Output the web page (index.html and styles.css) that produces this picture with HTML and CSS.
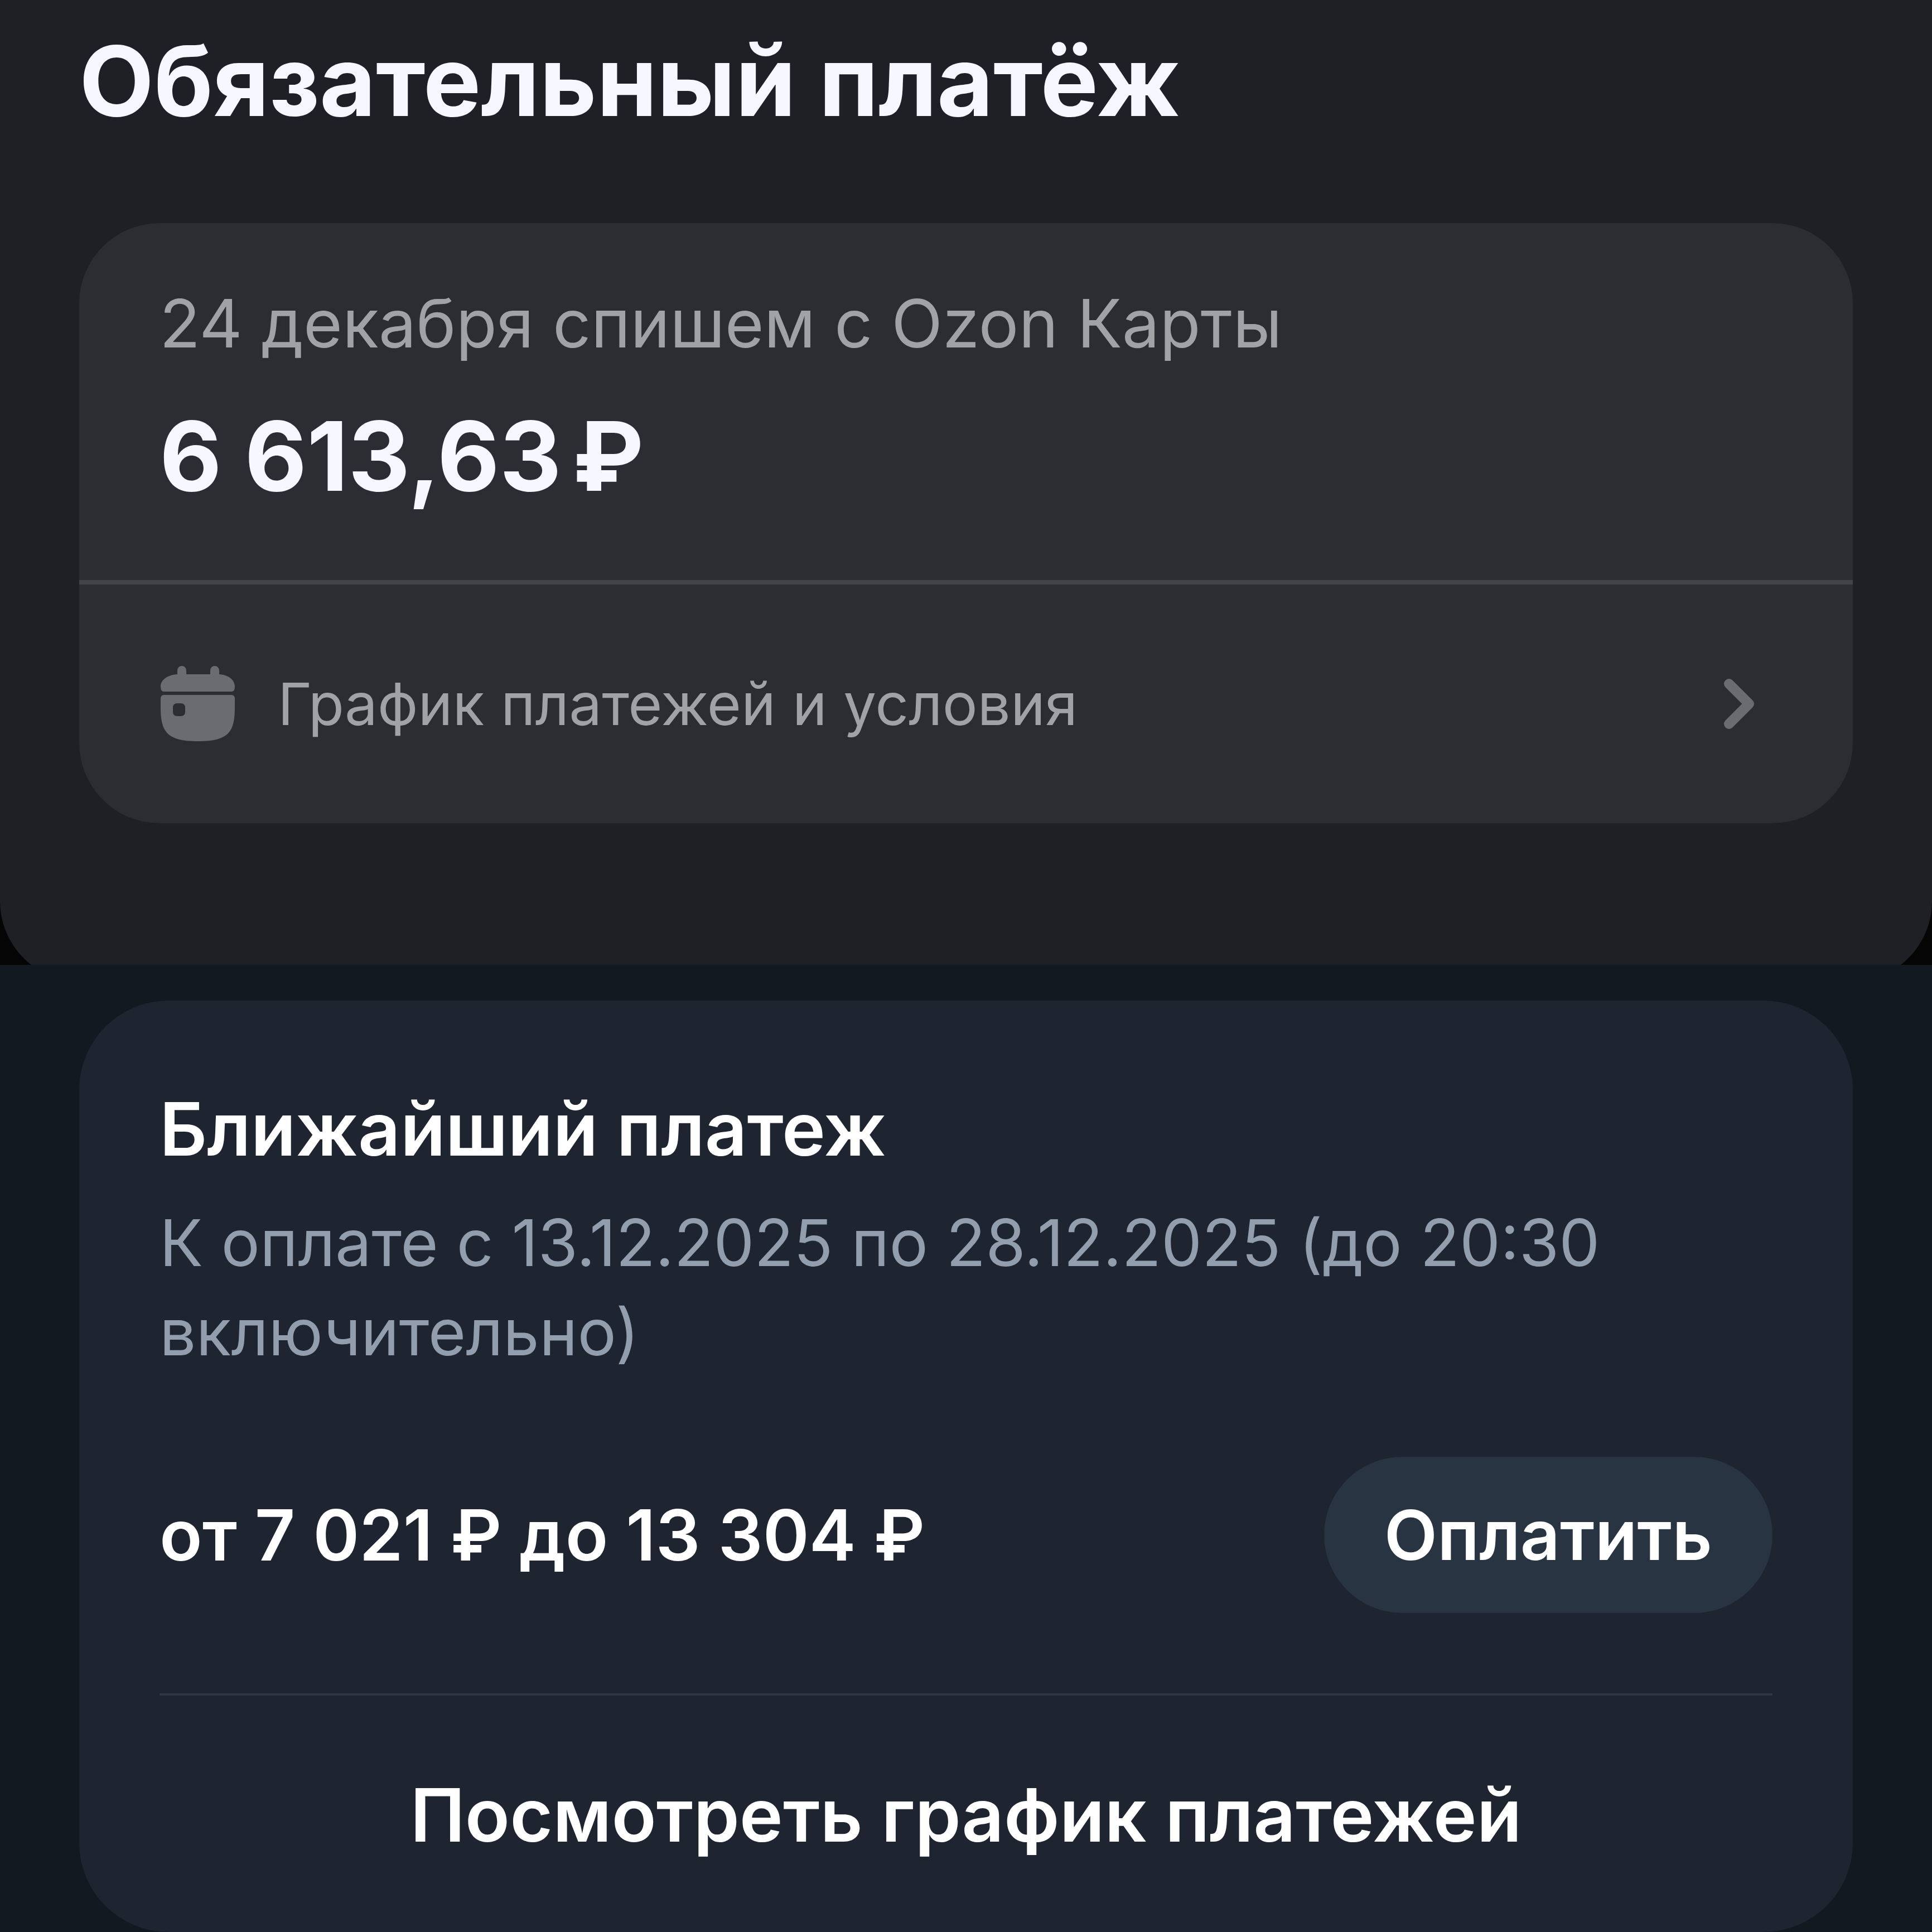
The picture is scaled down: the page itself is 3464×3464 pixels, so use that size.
FILE: index.html
```html
<!DOCTYPE html>
<html lang="ru">
<head>
    <meta charset="UTF-8">
    <meta name="viewport" content="width=device-width, initial-scale=1.0">
    <title>Платежи</title>
    <link rel="stylesheet" href="styles.css">
</head>
<body>
    <section class="ozon">
        <div class="ozon-sheet">
            <h1>Обязательный платёж</h1>
            <div class="ozon-card">
                <div class="ozon-summary">
                    <p class="ozon-date">24 декабря спишем с Ozon Карты</p>
                    <p class="ozon-amount">6 613,63<span class="currency">₽</span></p>
                </div>
                <a class="ozon-link" href="#">
                    <svg class="calendar" viewBox="0 0 136 136" aria-hidden="true">
                        <path d="M32 15V8a8 8 0 0 1 16 0v7h43V8a8 8 0 0 1 16 0v7C124 16 135 25 135 37q0 9-6 9H8q-6 0-6-9C2 25 14 16 32 15z" />
                        <path fill-rule="evenodd" d="M8 52h121q6 0 6 7v14c0 44-9 62-66 62S2 117 2 73V59q0-7 6-7zM32 67q-8 0-8 8v7q0 8 8 8h6q8 0 8-8v-7q0-8-8-8z" />
                    </svg>
                    <span>График платежей и условия</span>
                    <svg class="chevron" viewBox="0 0 56 92" aria-hidden="true">
                        <path d="M10 10l36 36L10 82" />
                    </svg>
                </a>
            </div>
        </div>
    </section>
    <section class="bank">
        <div class="bank-card">
            <h2>Ближайший платеж</h2>
            <p class="bank-date">К оплате с 13.12.2025 по 28.12.2025 (до 20:30 включительно)</p>
            <div class="bank-row">
                <p class="bank-amount">от 7 021 ₽ до 13 304 ₽</p>
                <button class="pay" type="button">Оплатить</button>
            </div>
            <a class="schedule" href="#">Посмотреть график платежей</a>
        </div>
    </section>
</body>
</html>
```
FILE: styles.css
```css
* {
    box-sizing: border-box;
}
body {
    margin: 0;
    min-height: 100vh;
    display: flex;
    flex-direction: column;
    background-color: #131920;
    color: #fff;
    font-family: Inter, "Noto Sans", sans-serif;
}
h1, h2, p {
    margin: 0;
}
a {
    color: inherit;
    text-decoration: none;
}
.ozon {
    overflow: hidden;
    background-color: #050505;
}
.ozon-sheet {
    margin-bottom: -30px;
    padding: 40px 142px 284px;
    background-color: #1f2025;
    border-radius: 0 0 144px 144px;
}
h1 {
    font-size: 174px;
    line-height: 210px;
    font-weight: 700;
    color: #f6f7ff;
}
.ozon-card {
    margin-top: 150px;
    border-radius: 144px;
    background-color: #2c2d32;
}
.ozon-summary {
    padding: 100px 144px 118px;
    border-bottom: 8px solid #434449;
}
.ozon-date {
    font-size: 120px;
    line-height: 160px;
    color: #a1a2a5;
}
.ozon-amount {
    margin-top: 52px;
    font-size: 172px;
    line-height: 210px;
    font-weight: 700;
    color: #f6f7ff;
}
.currency {
    margin-left: 20px;
}
.ozon-link {
    display: flex;
    align-items: center;
    gap: 76px;
    padding: 140px 176px 140px 144px;
    font-size: 105px;
    line-height: 148px;
    color: #a1a2a5;
}
.calendar {
    width: 136px;
    fill: #6b6c71;
}
.chevron {
    width: 56px;
    margin-left: auto;
    fill: none;
    stroke: #6b6c71;
    stroke-width: 18px;
    stroke-linecap: round;
    stroke-linejoin: round;
}
.bank {
    flex: 1;
    padding: 64px 142px 0;
}
.bank-card {
    padding: 150px 144px 130px;
    border-radius: 160px;
    background-color: #1e2430;
}
h2 {
    font-size: 132px;
    line-height: 160px;
    font-weight: 600;
}
.bank-date {
    margin-top: 44px;
    font-size: 116px;
    line-height: 160px;
    color: #929eae;
}
.bank-row {
    display: flex;
    align-items: center;
    justify-content: space-between;
    margin-top: 144px;
    padding-bottom: 144px;
    border-bottom: 4px solid #2f3541;
}
.bank-amount {
    font-size: 126px;
    line-height: 160px;
    font-weight: 600;
}
.pay {
    padding: 60px 108px;
    border: none;
    border-radius: 140px;
    background-color: #283441;
    color: #fff;
    font: inherit;
    font-size: 124px;
    line-height: 160px;
    font-weight: 600;
    cursor: pointer;
}
.schedule {
    display: block;
    margin-top: 134px;
    font-size: 132px;
    line-height: 160px;
    font-weight: 600;
    text-align: center;
}
```
